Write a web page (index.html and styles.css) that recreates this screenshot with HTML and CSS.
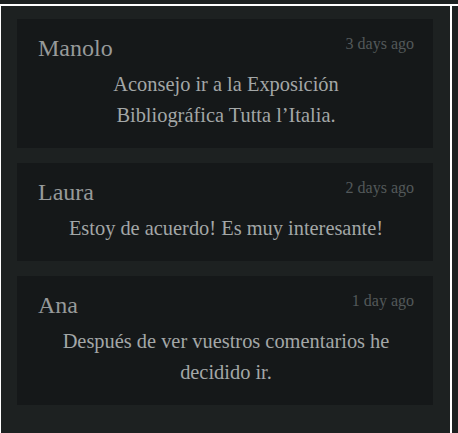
FILE: index.html
```html
<!DOCTYPE html>
<html lang="es">
<head>
<meta charset="utf-8">
<title>Comentarios</title>
<link rel="stylesheet" href="styles.css">
</head>
<body>
<div class="topbar"></div>
<div class="layout">
  <main class="panel">
    <article class="card">
      <header class="card-head">
        <span class="name">Manolo</span>
        <span class="time">3 days ago</span>
      </header>
      <p class="text">Aconsejo ir a la Exposición Bibliográfica Tutta l’Italia.</p>
    </article>
    <article class="card">
      <header class="card-head">
        <span class="name">Laura</span>
        <span class="time">2 days ago</span>
      </header>
      <p class="text">Estoy de acuerdo! Es muy interesante!</p>
    </article>
    <article class="card">
      <header class="card-head">
        <span class="name">Ana</span>
        <span class="time">1 day ago</span>
      </header>
      <p class="text">Después de ver vuestros comentarios he decidido ir.</p>
    </article>
  </main>
  <aside class="side"></aside>
</div>
</body>
</html>
```
FILE: styles.css
```css
html, body {
  margin: 0;
  padding: 0;
}
body {
  background: #ffffff;
  font-family: "Liberation Serif", "Times New Roman", serif;
  height: 433px;
  overflow: hidden;
}
.topbar {
  height: 4px;
  background: #1d2121;
  margin-bottom: 2px;
}
.layout {
  display: flex;
  gap: 2px;
  padding-left: 1px;
}
.panel {
  width: 449px;
  box-sizing: border-box;
  background: #1d2121;
  padding: 13px 17px 40px 16px;
  display: flex;
  flex-direction: column;
  gap: 15px;
}
.side {
  flex: 1;
  background: #1d2121;
}
.card {
  background: #151819;
  padding: 16px 19px 17px 21px;
}
.card-head {
  display: flex;
  justify-content: space-between;
  align-items: flex-start;
}
.name {
  font-size: 24px;
  color: #979a9a;
}
.time {
  font-size: 16px;
  color: #53585a;
}
.text {
  margin: 7px 0 0;
  font-size: 20.4px;
  line-height: 31px;
  color: #a3a7a7;
  text-align: center;
  padding: 0 20px;
}
```
